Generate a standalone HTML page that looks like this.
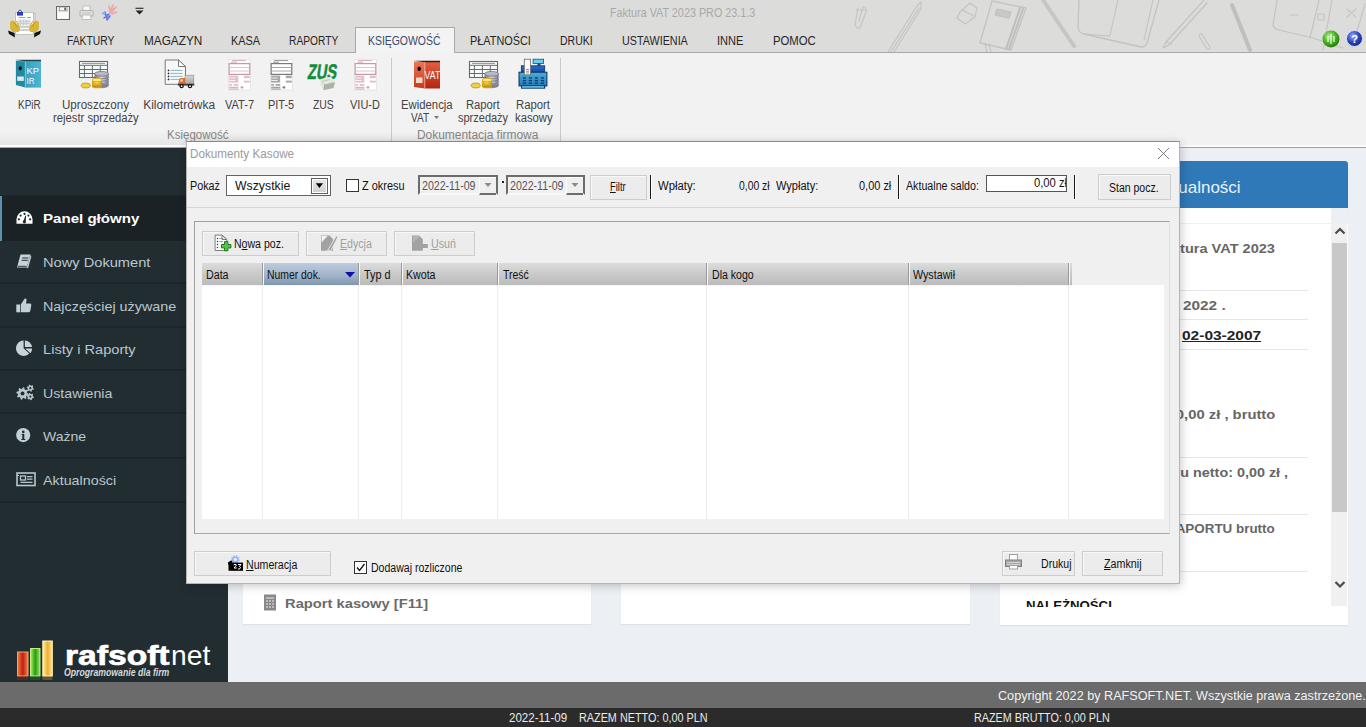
<!DOCTYPE html><html><head><meta charset="utf-8"><style>
html,body{margin:0;padding:0;width:1366px;height:727px;overflow:hidden;position:relative;background:#ecf0f5;font-family:"Liberation Sans",sans-serif;}
.t{position:absolute;white-space:pre;transform-origin:0 0;}
.r{position:absolute;box-sizing:border-box;}
u{text-decoration:underline;}
</style></head><body>
<div class="r" style="left:0px;top:0px;width:1366px;height:52px;background:#dcdcdb;"></div>
<svg class="r" style="left:0px;top:0px;" width="1366" height="52" viewBox="0 0 1366 52">
<g fill="none" stroke="#c3c3c2" stroke-width="1.1" stroke-linejoin="round" stroke-linecap="round">
<path d="M858 8 L855 24 Q856 29 860 28 L866 12 Q867 7 863 7 L859 21" />
<path d="M856 10 h10"/>
<path d="M888 52 L917 6 M891 52 L919 8 M894 52 L921 9 M917 6 L921 2 L921 9"/>
<path d="M960 12 L970 3 L977 8 L975 17 L965 24 L957 18z M962 10 l12 6"/>
<path d="M992 1 L1026 8 L1011 50 L980 43z" stroke-width="1.3"/>
<path d="M1020 8 L1006 49 M1023 9 L1009 49" stroke-width="2" stroke="#bdbdbc"/>
<path d="M997 9 L1011 12 L1009 18 L995 15z" fill="#c8c8c7" stroke="#c0c0bf"/>
<path d="M985 43 L987 52 M989 44 L991 52" />
<path d="M1043 0 L1074 46" stroke-width="4" stroke="#c6c6c5"/>
<path d="M1070 40 L1075 47" stroke-width="1.5"/>
<path d="M1079 0 L1078 27 Q1079 33 1084 34 L1141 47 Q1146 47 1147 43 L1159 0" stroke-width="1.3"/>
<path d="M1118 0 L1110 35 M1153 0 L1144 40 M1084 34 L1110 36"/>
<path d="M1204 0 L1166 42 L1163 48 L1169 45 L1207 3" stroke-width="1.2"/>
<path d="M1166 42 L1172 44"/>
<path d="M1199 36 L1207 49 Q1210 50 1210 47 L1202 34 Q1199 33 1199 36" />
<path d="M1232 5 L1250 50" stroke-width="4" stroke="#bfbfbe"/>
<path d="M1277 0 L1273 25 Q1274 29 1279 30 L1313 38 L1343 48" stroke-width="1.2"/>
<path d="M1319 0 L1310 38 M1332 0 L1323 50 M1290 15 h8 M1318 14 h6 v6 h-6z"/>
<path d="M1347 9 L1356 17 M1356 9 L1347 17" />
<path d="M1365 4 L1352 48" />
</g></svg>
<span class="t" style="left:609.70px;top:7.24px;font-size:12px;line-height:12px;color:#a9a9a9;transform:scaleX(0.9006);">Faktura VAT 2023 PRO 23.1.3</span>
<svg class="r" style="left:0px;top:0px;" width="50" height="45" viewBox="0 0 50 45">
<rect x="32" y="13.5" width="3" height="20" fill="#eee" stroke="#aaa" stroke-width="0.7"/>
<rect x="15.5" y="12.5" width="18" height="22" fill="#fdfdfd" stroke="#b8b8b8" stroke-width="0.8"/>
<path d="M18.5 17.5h7M27 17.5h4M19 27h12M19 30h12" stroke="#999" stroke-width="0.9"/>
<rect x="17.5" y="19.5" width="13" height="6" fill="#e4e4e4"/>
<path d="M17.5 21.5h13M17.5 23.5h13M20.5 19.5v6M23.5 19.5v6M26.5 19.5v6" stroke="#c6c6c6" stroke-width="0.7"/>
<rect x="17" y="12" width="6" height="3.6" fill="#2a3cc8"/>
<path d="M18.3 12 q1.7 -4.2 3.4 0" fill="none" stroke="#444" stroke-width="0.9"/>
<path d="M10 23 Q11 19.5 13.5 21 L19.5 26.5 Q21 30 18.5 32 L13 32.5 Q10 30 10 27z" fill="#d9b63a"/>
<path d="M16 21 l3 5 M13.5 21.5 l4 6" stroke="#b89420" stroke-width="0.8"/>
<path d="M39 23 Q38 19.5 35.5 21 L29.5 26.5 Q28 30 30.5 32 L36 32.5 Q39 30 39 27z" fill="#d9b63a"/>
<path d="M33 21 l-3 5 M35.5 21.5 l-4 6" stroke="#b89420" stroke-width="0.8"/>
<path d="M8 30.5 L14.5 33 L15 37.5 L9 34z" fill="#111"/>
<path d="M41 30.5 L34.5 33 L34 37.5 L40 34z" fill="#111"/>
</svg>
<svg class="r" style="left:56px;top:6px;" width="14" height="14" viewBox="0 0 14 14"><rect x="0.5" y="0.5" width="13" height="13" fill="#ececec" stroke="#6a6a6a"/><rect x="3.5" y="1" width="7.5" height="3.8" fill="#fafafa" stroke="#777" stroke-width="0.6"/><rect x="8.3" y="1.6" width="1.6" height="2.6" fill="#555"/><rect x="1.8" y="6.5" width="10.4" height="6.2" fill="#fbfbfb"/></svg>
<svg class="r" style="left:79px;top:5px;" width="15" height="16" viewBox="0 0 15 16"><rect x="4" y="1" width="7" height="4.5" fill="#f8f8f8" stroke="#b4b4b4" stroke-width="0.8"/><path d="M1 6.5 Q1 5.5 2 5.5 H13 Q14 5.5 14 6.5 V11 H1z" fill="#e0e0e0" stroke="#a8a8a8" stroke-width="0.8"/><path d="M3 8h9" stroke="#c4c4c4"/><path d="M3.5 10 H11.5 L12 14.5 H3z" fill="#fafafa" stroke="#b4b4b4" stroke-width="0.8"/></svg>
<svg class="r" style="left:100px;top:3px;" width="18" height="19" viewBox="0 0 18 19"><path d="M10 9 L13 2 M11 10 L16 4 M10 9 L9 3 M12 11 L16.5 9" stroke="#f0a0b0" stroke-width="1.6" stroke-linecap="round"/><path d="M11 8 L14 5" stroke="#f0b070" stroke-width="1.4"/><path d="M3 10 L8 13 M5 9 L7 16 M4 15 L9 11 M7 17 L10 13" stroke="#6a78e0" stroke-width="1.6" stroke-linecap="round"/><path d="M3 9 L5 11" stroke="#80d0f0" stroke-width="1.4"/></svg>
<svg class="r" style="left:134px;top:7px;" width="11" height="8" viewBox="0 0 11 8"><path d="M1.5 1.3h8" stroke="#333" stroke-width="1.2"/><path d="M1.5 3.6h8l-4 3.8z" fill="#222"/></svg>
<svg class="r" style="left:1322px;top:30px;" width="18" height="18" viewBox="0 0 18 18"><defs><radialGradient id="gg" cx="40%" cy="35%" r="65%"><stop offset="0" stop-color="#b8f090"/><stop offset="0.6" stop-color="#44b020"/><stop offset="1" stop-color="#2a7a10"/></radialGradient></defs><circle cx="9" cy="9" r="8.5" fill="url(#gg)"/><path d="M9 4v10M6 6v6M12 6v6" stroke="#e8ffe0" stroke-width="1.2"/></svg>
<svg class="r" style="left:1346px;top:30px;" width="17" height="17" viewBox="0 0 17 17"><defs><radialGradient id="bg2" cx="40%" cy="35%" r="65%"><stop offset="0" stop-color="#9ab0ff"/><stop offset="0.6" stop-color="#2a44b8"/><stop offset="1" stop-color="#1a2a88"/></radialGradient></defs><circle cx="8.5" cy="8.5" r="8" fill="url(#bg2)" stroke="#dfe4f8" stroke-width="1"/><text x="8.5" y="13" font-size="11" font-weight="bold" text-anchor="middle" fill="#fff" font-family="Liberation Sans">?</text></svg>
<div class="r" style="left:0px;top:52px;width:1366px;height:1px;background:#a9a9a9;"></div>
<div class="r" style="left:355px;top:27px;width:100px;height:26px;background:#f3f3f3;border:1px solid #a9a9a9;border-bottom:none;"></div>
<span class="t" style="left:67.30px;top:34.74px;font-size:12px;line-height:12px;color:#262626;transform:scaleX(0.8582);">FAKTURY</span>
<span class="t" style="left:144.00px;top:34.74px;font-size:12px;line-height:12px;color:#262626;transform:scaleX(0.9831);">MAGAZYN</span>
<span class="t" style="left:231.00px;top:34.74px;font-size:12px;line-height:12px;color:#262626;transform:scaleX(0.9062);">KASA</span>
<span class="t" style="left:289.00px;top:34.74px;font-size:12px;line-height:12px;color:#262626;transform:scaleX(0.8517);">RAPORTY</span>
<span class="t" style="left:368.00px;top:34.74px;font-size:12px;line-height:12px;color:#3b4a6b;transform:scaleX(0.8690);">KSIĘGOWOŚĆ</span>
<span class="t" style="left:470.30px;top:34.74px;font-size:12px;line-height:12px;color:#262626;transform:scaleX(0.9060);">PŁATNOŚCI</span>
<span class="t" style="left:560.00px;top:34.74px;font-size:12px;line-height:12px;color:#262626;transform:scaleX(0.8784);">DRUKI</span>
<span class="t" style="left:622.00px;top:34.74px;font-size:12px;line-height:12px;color:#262626;transform:scaleX(0.8973);">USTAWIENIA</span>
<span class="t" style="left:717.00px;top:34.74px;font-size:12px;line-height:12px;color:#262626;transform:scaleX(0.9207);">INNE</span>
<span class="t" style="left:773.00px;top:34.74px;font-size:12px;line-height:12px;color:#262626;transform:scaleX(0.9435);">POMOC</span>
<div class="r" style="left:0px;top:53px;width:1366px;height:92px;background:#f2f2f2;"></div>
<div class="r" style="left:0px;top:131px;width:561px;height:14px;background:linear-gradient(#f2f2f2,#e6e6e6);"></div>
<div class="r" style="left:0px;top:145px;width:1366px;height:2px;background:#fbfbfb;"></div>
<div class="r" style="left:0px;top:147px;width:1366px;height:1px;background:#a4a4a4;"></div>
<div class="r" style="left:391px;top:58px;width:1px;height:83px;background:#c9c9c9;"></div>
<div class="r" style="left:560px;top:58px;width:1px;height:83px;background:#c9c9c9;"></div>
<span class="t" style="left:17.60px;top:98.84px;font-size:12px;line-height:12px;color:#444;transform:scaleX(0.8286);">KPiR</span>
<span class="t" style="left:62.40px;top:98.84px;font-size:12px;line-height:12px;color:#444;transform:scaleX(0.9652);">Uproszczony</span>
<span class="t" style="left:52.70px;top:112.04px;font-size:12px;line-height:12px;color:#444;transform:scaleX(0.9374);">rejestr sprzedaży</span>
<span class="t" style="left:143.20px;top:98.84px;font-size:12px;line-height:12px;color:#444;">Kilometrówka</span>
<span class="t" style="left:225.30px;top:98.84px;font-size:12px;line-height:12px;color:#444;transform:scaleX(0.9219);">VAT-7</span>
<span class="t" style="left:268.40px;top:98.84px;font-size:12px;line-height:12px;color:#444;transform:scaleX(0.9103);">PIT-5</span>
<span class="t" style="left:313.00px;top:98.84px;font-size:12px;line-height:12px;color:#444;transform:scaleX(0.8667);">ZUS</span>
<span class="t" style="left:350.20px;top:98.84px;font-size:12px;line-height:12px;color:#444;transform:scaleX(0.9152);">VIU-D</span>
<span class="t" style="left:400.60px;top:98.84px;font-size:12px;line-height:12px;color:#444;transform:scaleX(0.9436);">Ewidencja</span>
<span class="t" style="left:411.40px;top:112.04px;font-size:12px;line-height:12px;color:#444;transform:scaleX(0.8364);">VAT</span>
<span class="t" style="left:466.40px;top:98.84px;font-size:12px;line-height:12px;color:#444;transform:scaleX(0.9351);">Raport</span>
<span class="t" style="left:458.40px;top:112.04px;font-size:12px;line-height:12px;color:#444;transform:scaleX(0.9164);">sprzedaży</span>
<span class="t" style="left:516.40px;top:98.84px;font-size:12px;line-height:12px;color:#444;transform:scaleX(0.9405);">Raport</span>
<span class="t" style="left:515.00px;top:112.04px;font-size:12px;line-height:12px;color:#444;transform:scaleX(0.9400);">kasowy</span>
<svg class="r" style="left:434px;top:116px;" width="6" height="4" viewBox="0 0 6 4"><path d="M0 0h5l-2.5 3z" fill="#777"/></svg>
<span class="t" style="left:167.00px;top:128.84px;font-size:12px;line-height:12px;color:#848484;transform:scaleX(0.9609);">Księgowość</span>
<span class="t" style="left:416.70px;top:128.84px;font-size:12px;line-height:12px;color:#848484;transform:scaleX(0.9943);">Dokumentacja firmowa</span>
<svg class="r" style="left:10px;top:55px;" width="40" height="37" viewBox="0 0 40 37"><defs><linearGradient id="kpf" x1="0" x2="1"><stop offset="0" stop-color="#3a9fbc"/><stop offset="1" stop-color="#4cb4d4"/></linearGradient></defs>
<path d="M5.9 5.5 L15.3 6.5 L15.3 32.6 L5.9 30z" fill="#23899e"/>
<rect x="15.3" y="6.5" width="15.7" height="26.1" fill="url(#kpf)"/>
<path d="M5.9 4.8 H31 V6.6 H15.3z" fill="#1d4a52"/>
<path d="M15.3 6.5 V32.6" stroke="#7fd4ea" stroke-width="0.8"/>
<ellipse cx="10.3" cy="13.3" rx="1.7" ry="2.1" fill="#0d1a1c"/>
<rect x="7.2" y="21.5" width="6.6" height="4.4" fill="#dfe9ea"/>
<text x="16.6" y="18.6" font-size="9.5" font-family="Liberation Sans" fill="#f4fcff" textLength="12.5" lengthAdjust="spacingAndGlyphs">KP</text>
<text x="16.6" y="29" font-size="9.5" font-family="Liberation Sans" fill="#f4fcff" textLength="8" lengthAdjust="spacingAndGlyphs">IR</text></svg>
<svg class="r" style="left:77px;top:60px;" width="34" height="30" viewBox="0 0 34 30"><defs><linearGradient id="slv77" x1="0" x2="1"><stop offset="0" stop-color="#7a7a88"/><stop offset="0.5" stop-color="#d8d8e0"/><stop offset="1" stop-color="#808090"/></linearGradient>
<linearGradient id="gld77" x1="0" x2="1"><stop offset="0" stop-color="#e0a810"/><stop offset="0.5" stop-color="#ffe060"/><stop offset="1" stop-color="#d09810"/></linearGradient></defs>
<rect x="2.5" y="1.5" width="28" height="16" fill="#fafcfc" stroke="#5e6e6e" stroke-width="1.1"/>
<path d="M2.5 5.3h28M2.5 9.5h28M2.5 13.5h28M7.4 5.3v12.2M15.4 5.3v12.2M23.3 5.3v12.2" stroke="#5e6e6e" stroke-width="1"/>
<path d="M5 3.4h23" stroke="#6a7a7a" stroke-width="0.8"/>
<rect x="17.6" y="13.8" width="14" height="12.2" fill="url(#slv77)"/>
<ellipse cx="24.6" cy="13.8" rx="7" ry="2.4" fill="#b8b8c4" stroke="#6a6a7a" stroke-width="0.7"/>
<ellipse cx="24.6" cy="26" rx="7" ry="2.2" fill="#8a8a98"/>
<path d="M17.6 16.5 a7 2.2 0 0 0 14 0" fill="none" stroke="#6a6a7a" stroke-width="0.7"/><path d="M17.6 19 a7 2.2 0 0 0 14 0" fill="none" stroke="#6a6a7a" stroke-width="0.7"/><path d="M17.6 21.5 a7 2.2 0 0 0 14 0" fill="none" stroke="#6a6a7a" stroke-width="0.7"/><path d="M17.6 24 a7 2.2 0 0 0 14 0" fill="none" stroke="#6a6a7a" stroke-width="0.7"/>
<rect x="15" y="20" width="10" height="6.5" fill="url(#gld77)"/>
<ellipse cx="20" cy="20" rx="5" ry="1.9" fill="#ffe878" stroke="#c09010" stroke-width="0.7"/>
<ellipse cx="20" cy="26.5" rx="5" ry="1.8" fill="#d8a010"/>
<path d="M15 22.5 a5 1.8 0 0 0 10 0" fill="none" stroke="#b88a10" stroke-width="0.7"/><path d="M15 25 a5 1.8 0 0 0 10 0" fill="none" stroke="#b88a10" stroke-width="0.7"/>
<ellipse cx="8.7" cy="25.5" rx="4.6" ry="2.4" fill="#f0d040" stroke="#b89010" stroke-width="0.8"/></svg>
<svg class="r" style="left:467px;top:60px;" width="34" height="30" viewBox="0 0 34 30"><defs><linearGradient id="slv467" x1="0" x2="1"><stop offset="0" stop-color="#7a7a88"/><stop offset="0.5" stop-color="#d8d8e0"/><stop offset="1" stop-color="#808090"/></linearGradient>
<linearGradient id="gld467" x1="0" x2="1"><stop offset="0" stop-color="#e0a810"/><stop offset="0.5" stop-color="#ffe060"/><stop offset="1" stop-color="#d09810"/></linearGradient></defs>
<rect x="2.5" y="1.5" width="28" height="16" fill="#fafcfc" stroke="#5e6e6e" stroke-width="1.1"/>
<path d="M2.5 5.3h28M2.5 9.5h28M2.5 13.5h28M7.4 5.3v12.2M15.4 5.3v12.2M23.3 5.3v12.2" stroke="#5e6e6e" stroke-width="1"/>
<path d="M5 3.4h23" stroke="#6a7a7a" stroke-width="0.8"/>
<rect x="17.6" y="13.8" width="14" height="12.2" fill="url(#slv467)"/>
<ellipse cx="24.6" cy="13.8" rx="7" ry="2.4" fill="#b8b8c4" stroke="#6a6a7a" stroke-width="0.7"/>
<ellipse cx="24.6" cy="26" rx="7" ry="2.2" fill="#8a8a98"/>
<path d="M17.6 16.5 a7 2.2 0 0 0 14 0" fill="none" stroke="#6a6a7a" stroke-width="0.7"/><path d="M17.6 19 a7 2.2 0 0 0 14 0" fill="none" stroke="#6a6a7a" stroke-width="0.7"/><path d="M17.6 21.5 a7 2.2 0 0 0 14 0" fill="none" stroke="#6a6a7a" stroke-width="0.7"/><path d="M17.6 24 a7 2.2 0 0 0 14 0" fill="none" stroke="#6a6a7a" stroke-width="0.7"/>
<rect x="15" y="20" width="10" height="6.5" fill="url(#gld467)"/>
<ellipse cx="20" cy="20" rx="5" ry="1.9" fill="#ffe878" stroke="#c09010" stroke-width="0.7"/>
<ellipse cx="20" cy="26.5" rx="5" ry="1.8" fill="#d8a010"/>
<path d="M15 22.5 a5 1.8 0 0 0 10 0" fill="none" stroke="#b88a10" stroke-width="0.7"/><path d="M15 25 a5 1.8 0 0 0 10 0" fill="none" stroke="#b88a10" stroke-width="0.7"/>
<ellipse cx="8.7" cy="25.5" rx="4.6" ry="2.4" fill="#f0d040" stroke="#b89010" stroke-width="0.8"/></svg>
<svg class="r" style="left:158px;top:54px;" width="45" height="40" viewBox="0 0 45 40"><defs><linearGradient id="trk" x1="0" y1="0" x2="0" y2="1"><stop offset="0" stop-color="#d8d8d8"/><stop offset="1" stop-color="#a4a4a4"/></linearGradient></defs>
<path d="M7.2 6 H20.5 L27.5 12.5 V30.3 H7.2z" fill="#f7f9f9" stroke="#787878" stroke-width="1"/>
<path d="M20.5 6 V12.5 H27.5z" fill="#fff" stroke="#787878" stroke-width="1" stroke-linejoin="round"/>
<circle cx="10.5" cy="16.4" r="0.85" fill="#222"/><path d="M12.4 16.4H24.5" stroke="#8fb4c4" stroke-width="1"/><circle cx="10.5" cy="19.4" r="0.85" fill="#222"/><path d="M12.4 19.4H24.5" stroke="#8fb4c4" stroke-width="1"/><circle cx="10.5" cy="22.4" r="0.85" fill="#222"/><path d="M12.4 22.4H24.5" stroke="#8fb4c4" stroke-width="1"/><circle cx="10.5" cy="25.4" r="0.85" fill="#222"/><path d="M12.4 25.4H24.5" stroke="#8fb4c4" stroke-width="1"/>
<rect x="27" y="21.2" width="8.8" height="9" fill="url(#trk)" stroke="#8a8a8a" stroke-width="0.6"/>
<path d="M20 30.2 L21.3 25 Q22 24 23.5 24 H27 V30.2z" fill="#d8702c"/>
<path d="M22 27.5 L22.8 25.3 H25 V27.5z" fill="#f0c8a0"/>
<rect x="19.8" y="29.8" width="16.5" height="1.8" fill="#3a3a3a"/>
<circle cx="23.6" cy="32.2" r="2.1" fill="#111"/><circle cx="23.6" cy="32.2" r="0.9" fill="#fff"/>
<circle cx="32" cy="32.2" r="2.1" fill="#111"/><circle cx="32" cy="32.2" r="0.9" fill="#fff"/></svg>
<svg class="r" style="left:228px;top:58.5px;" width="23" height="32" viewBox="0 0 23 32"><rect x="0.5" y="0.5" width="22" height="30.5" fill="#fff" stroke="#e2e2e2" stroke-width="0.8"/>
<path d="M4 1.6h14M3 3.2h6" stroke="#c898a8" stroke-width="0.8"/>
<rect x="1.2" y="4.6" width="20.5" height="10.8" fill="none" stroke="#c898a8" stroke-width="1.2"/>
<path d="M1.2 8.5h20.5M1.2 12h20.5" stroke="#e4c0cc" stroke-width="1"/>
<rect x="1.2" y="16.6" width="8.8" height="7" fill="#e4c0cc"/>
<path d="M1.5 19h6M1.5 21.5h6" stroke="#fff" stroke-width="0.8"/>
<rect x="15.8" y="16.6" width="6" height="2.6" fill="#e4c0cc"/><rect x="15.8" y="21.6" width="6" height="2" fill="#e4c0cc"/>
<rect x="1.2" y="25" width="2.8" height="1.8" fill="#e4c0cc"/><rect x="5.6" y="25" width="4.6" height="1.8" fill="#e4c0cc"/>
<path d="M1.2 28.3h9.5M1.2 30h9.5" stroke="#c898a8" stroke-width="0.9"/>
<rect x="12.6" y="27.4" width="2.6" height="2" fill="#c898a8"/>
<path d="M10.5 16.5v13" stroke="#eee" stroke-width="0.8"/></svg>
<svg class="r" style="left:270px;top:58.5px;" width="23" height="32" viewBox="0 0 23 32"><rect x="0.5" y="0.5" width="22" height="30.5" fill="#fff" stroke="#e2e2e2" stroke-width="0.8"/>
<path d="M4 1.6h14M3 3.2h6" stroke="#7a7a7a" stroke-width="0.8"/>
<rect x="1.2" y="4.6" width="20.5" height="10.8" fill="none" stroke="#7a7a7a" stroke-width="1.2"/>
<path d="M1.2 8.5h20.5M1.2 12h20.5" stroke="#a8a8a8" stroke-width="1"/>
<rect x="1.2" y="16.6" width="8.8" height="7" fill="#a8a8a8"/>
<path d="M1.5 19h6M1.5 21.5h6" stroke="#fff" stroke-width="0.8"/>
<rect x="15.8" y="16.6" width="6" height="2.6" fill="#a8a8a8"/><rect x="15.8" y="21.6" width="6" height="2" fill="#a8a8a8"/>
<rect x="1.2" y="25" width="2.8" height="1.8" fill="#a8a8a8"/><rect x="5.6" y="25" width="4.6" height="1.8" fill="#a8a8a8"/>
<path d="M1.2 28.3h9.5M1.2 30h9.5" stroke="#7a7a7a" stroke-width="0.9"/>
<rect x="12.6" y="27.4" width="2.6" height="2" fill="#7a7a7a"/>
<path d="M10.5 16.5v13" stroke="#eee" stroke-width="0.8"/></svg>
<svg class="r" style="left:354px;top:58.5px;" width="23" height="32" viewBox="0 0 23 32"><rect x="0.5" y="0.5" width="22" height="30.5" fill="#fff" stroke="#e2e2e2" stroke-width="0.8"/>
<path d="M4 1.6h14M3 3.2h6" stroke="#c898a8" stroke-width="0.8"/>
<rect x="1.2" y="4.6" width="20.5" height="10.8" fill="none" stroke="#c898a8" stroke-width="1.2"/>
<path d="M1.2 8.5h20.5M1.2 12h20.5" stroke="#e4c0cc" stroke-width="1"/>
<rect x="1.2" y="16.6" width="8.8" height="7" fill="#e4c0cc"/>
<path d="M1.5 19h6M1.5 21.5h6" stroke="#fff" stroke-width="0.8"/>
<rect x="15.8" y="16.6" width="6" height="2.6" fill="#e4c0cc"/><rect x="15.8" y="21.6" width="6" height="2" fill="#e4c0cc"/>
<rect x="1.2" y="25" width="2.8" height="1.8" fill="#e4c0cc"/><rect x="5.6" y="25" width="4.6" height="1.8" fill="#e4c0cc"/>
<path d="M1.2 28.3h9.5M1.2 30h9.5" stroke="#c898a8" stroke-width="0.9"/>
<rect x="12.6" y="27.4" width="2.6" height="2" fill="#c898a8"/>
<path d="M10.5 16.5v13" stroke="#eee" stroke-width="0.8"/></svg>
<svg class="r" style="left:300px;top:55px;" width="45" height="40" viewBox="0 0 45 40"><text x="7" y="24.5" font-size="21" font-weight="bold" font-family="Liberation Sans" fill="#128c3e" stroke="#128c3e" stroke-width="0.6" textLength="29" lengthAdjust="spacingAndGlyphs" transform="skewX(-8) translate(3.5 0)">ZUS</text>
<path d="M20.5 24 L31 21.5 L35 27 L33.5 33 L24 35 L20 30z" fill="#e4e8e0"/><path d="M24 35 L33.5 33 L35 27 L24.5 29.5z" fill="#aab4a8"/><path d="M24.5 29.5 L24 35" stroke="#8a948a" stroke-width="0.6"/><path d="M21.5 26.5 l8 -2 M22 28.5 l2 -0.5" stroke="#b0b8b0" stroke-width="0.7"/></svg>
<svg class="r" style="left:405px;top:55px;" width="45" height="40" viewBox="0 0 45 40"><defs><linearGradient id="vtf" x1="0" y1="0" x2="0" y2="1"><stop offset="0" stop-color="#e2603e"/><stop offset="1" stop-color="#b42414"/></linearGradient>
<linearGradient id="vts" x1="0" y1="0" x2="0" y2="1"><stop offset="0" stop-color="#ec7858"/><stop offset="1" stop-color="#c8381e"/></linearGradient></defs>
<path d="M9 6.5 L19.8 7 V33.5 L9 32z" fill="url(#vts)"/>
<rect x="19.8" y="7" width="15.2" height="26.5" fill="url(#vtf)"/>
<path d="M9 5.8 H35 V7.3 H19.8z" fill="#3a1a10"/>
<path d="M19.8 7 V33.5" stroke="#f8b8a0" stroke-width="0.7"/>
<ellipse cx="14.2" cy="13.8" rx="1.8" ry="2.3" fill="#140808"/>
<rect x="11" y="22.5" width="6.5" height="5.5" fill="#efd8c4"/>
<text x="19.6" y="24.4" font-size="11" font-family="Liberation Sans" fill="#fff" textLength="15.6" lengthAdjust="spacingAndGlyphs">VAT</text></svg>
<svg class="r" style="left:510px;top:54px;" width="45" height="40" viewBox="0 0 45 40"><defs><linearGradient id="cru" x1="0" y1="0" x2="0" y2="1"><stop offset="0" stop-color="#2a6ed0"/><stop offset="1" stop-color="#1048a0"/></linearGradient>
<linearGradient id="crl" x1="0" y1="0" x2="0" y2="1"><stop offset="0" stop-color="#48b0d8"/><stop offset="1" stop-color="#2878b8"/></linearGradient></defs>
<rect x="23.1" y="5.2" width="10.5" height="4.2" fill="#68cff0" stroke="#1a4a80" stroke-width="0.8"/>
<rect x="27.5" y="9.4" width="3" height="2.6" fill="#1a4a80"/>
<rect x="11.3" y="11.8" width="23.4" height="6.8" fill="url(#cru)" stroke="#0c3060" stroke-width="0.8"/>
<rect x="9" y="18.2" width="27.9" height="13.7" fill="url(#crl)" stroke="#0c3060" stroke-width="1"/>
<rect x="14.3" y="5.2" width="6.3" height="15.7" fill="#fbfbfb" stroke="#6a6a6a" stroke-width="0.8"/>
<path d="M16 15.5h3M16 17.3h3M16 19h3" stroke="#5a6a8a" stroke-width="0.7"/>
<rect x="12.8" y="23.3" width="3.2" height="1.3" fill="#0c3a70"/><rect x="12.8" y="25.9" width="3.2" height="1.3" fill="#0c3a70"/><rect x="12.8" y="28.5" width="3.2" height="1.3" fill="#0c3a70"/><rect x="18.8" y="23.3" width="3.2" height="1.3" fill="#0c3a70"/><rect x="18.8" y="25.9" width="3.2" height="1.3" fill="#0c3a70"/><rect x="18.8" y="28.5" width="3.2" height="1.3" fill="#0c3a70"/><rect x="24.8" y="23.3" width="3.2" height="1.3" fill="#0c3a70"/><rect x="24.8" y="25.9" width="3.2" height="1.3" fill="#0c3a70"/><rect x="24.8" y="28.5" width="3.2" height="1.3" fill="#0c3a70"/><rect x="30.8" y="23.3" width="3.2" height="1.3" fill="#0c3a70"/><rect x="30.8" y="25.9" width="3.2" height="1.3" fill="#0c3a70"/><rect x="30.8" y="28.5" width="3.2" height="1.3" fill="#0c3a70"/>
<rect x="11" y="31.6" width="24.2" height="3.1" fill="#0c3a70"/><rect x="12" y="32.2" width="22" height="1.5" fill="#6ad0f0"/></svg>
<div class="r" style="left:0px;top:148px;width:228px;height:534px;background:#222d32;"></div>
<div class="r" style="left:0px;top:196px;width:228px;height:45px;background:#1b2226;"></div>
<div class="r" style="left:0px;top:196px;width:2px;height:45px;background:#5d8fae;"></div>
<div class="r" style="left:0px;top:282px;width:228px;height:2px;background:#1c2529;"></div>
<div class="r" style="left:0px;top:326px;width:228px;height:2px;background:#1c2529;"></div>
<div class="r" style="left:0px;top:369px;width:228px;height:2px;background:#1c2529;"></div>
<div class="r" style="left:0px;top:412px;width:228px;height:2px;background:#1c2529;"></div>
<div class="r" style="left:0px;top:457px;width:228px;height:2px;background:#1c2529;"></div>
<div class="r" style="left:0px;top:501px;width:228px;height:2px;background:#1c2529;"></div>
<div class="r" style="left:0px;top:195px;width:228px;height:1px;background:#1c2529;"></div>
<span class="t" style="left:43.10px;top:212.10px;font-size:13px;line-height:13px;color:#ffffff;font-weight:bold;transform:scaleX(1.1595);">Panel główny</span>
<span class="t" style="left:42.80px;top:255.90px;font-size:13px;line-height:13px;color:#b8c7ce;transform:scaleX(1.1260);">Nowy Dokument</span>
<span class="t" style="left:42.80px;top:299.70px;font-size:13px;line-height:13px;color:#b8c7ce;transform:scaleX(1.1041);">Najczęściej używane</span>
<span class="t" style="left:42.80px;top:342.70px;font-size:13px;line-height:13px;color:#b8c7ce;transform:scaleX(1.1253);">Listy i Raporty</span>
<span class="t" style="left:42.80px;top:387.30px;font-size:13px;line-height:13px;color:#b8c7ce;transform:scaleX(1.0906);">Ustawienia</span>
<span class="t" style="left:42.80px;top:430.20px;font-size:13px;line-height:13px;color:#b8c7ce;transform:scaleX(1.0800);">Ważne</span>
<span class="t" style="left:42.80px;top:473.90px;font-size:13px;line-height:13px;color:#b8c7ce;transform:scaleX(1.1000);">Aktualności</span>
<svg class="r" style="left:15.5px;top:211px;" width="17" height="13" viewBox="0 0 17 13"><path d="M0.5 12.8 V8.3 A8 8 0 0 1 16.5 8.3 V12.8z" fill="#fff"/><circle cx="8.5" cy="2.9" r="1.1" fill="#1e282c"/><circle cx="4.6" cy="4.6" r="1.1" fill="#1e282c"/><circle cx="12.4" cy="4.6" r="1.1" fill="#1e282c"/><circle cx="2.9" cy="8.3" r="1.1" fill="#1e282c"/><circle cx="14.1" cy="8.3" r="1.1" fill="#1e282c"/><path d="M7.2 10.6 L9.4 4.5 L10.1 4.8 L9.6 10.8z" fill="#1e282c"/><circle cx="8.4" cy="10.8" r="1.6" fill="#1e282c"/></svg>
<svg class="r" style="left:15.5px;top:253.5px;" width="16" height="15" viewBox="0 0 16 15"><path d="M4.5 0.5 H14.3 L10.8 13.6 H1z" fill="#c9d3d6"/><path d="M14.3 0.5 L15.3 3 L12 14.5 L10.8 13.6z" fill="#b8c7ce"/><path d="M6.2 4 H12.4 M5.6 6.3 H11.8" stroke="#222d32" stroke-width="1"/><path d="M1.8 12.3 H10.6" stroke="#222d32" stroke-width="0.9"/></svg>
<svg class="r" style="left:15.5px;top:297.5px;" width="16" height="15" viewBox="0 0 16 15"><rect x="0.3" y="6.5" width="3.8" height="7.8" fill="#c3d0d6"/><path d="M4.8 6.6 L8.2 1.2 Q9.8 -0.2 10.6 1.8 L10 5.6 H14.4 Q15.6 6.2 15.2 7.8 L14.2 13.2 Q13.8 14.3 12.6 14.3 H4.8z" fill="#c3d0d6"/></svg>
<svg class="r" style="left:15.5px;top:339.5px;" width="17" height="17" viewBox="0 0 17 17"><path d="M7.6 8.2 L7.6 0.5 A7.7 7.7 0 1 0 13.2 13.6 z" fill="#c7d3d8"/><path d="M8.9 7.1 L8.9 0.5 A7.5 7.5 0 0 1 16 7.1 z" fill="#c7d3d8"/><path d="M9.3 8.5 L16.1 8.5 A7.5 7.5 0 0 1 14.4 13.2 z" fill="#c7d3d8"/></svg>
<svg class="r" style="left:15.5px;top:384px;" width="19" height="17" viewBox="0 0 19 17"><path d="M12.67 10.11 L12.43 11.30 L10.56 11.67 L10.06 12.42 L10.43 14.29 L9.42 14.97 L7.84 13.90 L6.95 14.08 L5.89 15.67 L4.70 15.43 L4.33 13.56 L3.58 13.06 L1.71 13.43 L1.03 12.42 L2.10 10.84 L1.92 9.95 L0.33 8.89 L0.57 7.70 L2.44 7.33 L2.94 6.58 L2.57 4.71 L3.58 4.03 L5.16 5.10 L6.05 4.92 L7.11 3.33 L8.30 3.57 L8.67 5.44 L9.42 5.94 L11.29 5.57 L11.97 6.58 L10.90 8.16 L11.08 9.05z" fill="#b8c7ce"/><circle cx="6.5" cy="9.5" r="2.0" fill="#222d32"/><path d="M17.87 4.67 L17.63 5.58 L16.36 5.78 L15.88 6.26 L15.68 7.53 L14.77 7.77 L13.96 6.78 L13.31 6.60 L12.11 7.06 L11.44 6.39 L11.90 5.19 L11.72 4.54 L10.73 3.73 L10.97 2.82 L12.24 2.62 L12.72 2.14 L12.92 0.87 L13.83 0.63 L14.64 1.62 L15.29 1.80 L16.49 1.34 L17.16 2.01 L16.70 3.21 L16.88 3.86z" fill="#b8c7ce"/><circle cx="14.3" cy="4.2" r="1.1" fill="#222d32"/><path d="M17.87 13.07 L17.63 13.98 L16.36 14.18 L15.88 14.66 L15.68 15.93 L14.77 16.17 L13.96 15.18 L13.31 15.00 L12.11 15.46 L11.44 14.79 L11.90 13.59 L11.72 12.94 L10.73 12.13 L10.97 11.22 L12.24 11.02 L12.72 10.54 L12.92 9.27 L13.83 9.03 L14.64 10.02 L15.29 10.20 L16.49 9.74 L17.16 10.41 L16.70 11.61 L16.88 12.26z" fill="#b8c7ce"/><circle cx="14.3" cy="12.6" r="1.1" fill="#222d32"/></svg>
<svg class="r" style="left:15.8px;top:428px;" width="15" height="15" viewBox="0 0 15 15"><circle cx="7.2" cy="7.1" r="7.1" fill="#c3d0d6"/><path d="M5.6 6 H8.3 V11 H9.3 V12 H5.3 V11 H6.3 V7 H5.6z" fill="#222d32"/><circle cx="7.3" cy="3.9" r="1.3" fill="#222d32"/></svg>
<svg class="r" style="left:15.5px;top:471.5px;" width="20" height="15" viewBox="0 0 20 15"><rect x="1" y="1" width="18" height="12.5" fill="none" stroke="#b8c7ce" stroke-width="1.6"/><path d="M1 3.5 H3" stroke="#b8c7ce"/><rect x="4.5" y="4" width="5" height="4" fill="none" stroke="#b8c7ce" stroke-width="1.3"/><path d="M11 4.7 H16.5 M11 7.2 H16.5 M4.5 10.3 H16.5" stroke="#b8c7ce" stroke-width="1.3"/></svg>
<svg class="r" style="left:15px;top:639px;" width="40" height="42" viewBox="0 0 40 42"><defs>
<linearGradient id="lr" x1="0" x2="1"><stop offset="0" stop-color="#f08040"/><stop offset="0.5" stop-color="#c02010"/><stop offset="1" stop-color="#f08050"/></linearGradient>
<linearGradient id="lg" x1="0" x2="1"><stop offset="0" stop-color="#b0f060"/><stop offset="0.5" stop-color="#20a010"/><stop offset="1" stop-color="#a0e060"/></linearGradient>
<linearGradient id="ly" x1="0" x2="1"><stop offset="0" stop-color="#fff0a0"/><stop offset="0.5" stop-color="#f0b030"/><stop offset="1" stop-color="#ffe090"/></linearGradient></defs>
<rect x="2.5" y="13" width="10.5" height="24" fill="url(#lr)" stroke="#f4a070" stroke-width="1"/>
<rect x="15.5" y="9.5" width="9.5" height="27.5" fill="url(#lg)" stroke="#c0f080" stroke-width="1"/>
<rect x="27.8" y="2" width="9.5" height="35" fill="url(#ly)" stroke="#fff4c0" stroke-width="1"/>
<rect x="2" y="37" width="11" height="4" fill="#c02010" opacity="0.3"/><rect x="15" y="37" width="10" height="4" fill="#20a010" opacity="0.3"/><rect x="27.3" y="37" width="10" height="4" fill="#f0b030" opacity="0.3"/></svg>
<span class="t" style="left:64.60px;top:641.70px;font-size:28px;line-height:28px;color:#ffffff;font-weight:bold;transform:scaleX(1.2000);-webkit-text-stroke:0.7px #fff;">rafsoft</span>
<span class="t" style="left:170.50px;top:641.70px;font-size:28px;line-height:28px;color:#ffffff;transform:scaleX(1.0077);">net</span>
<span class="t" style="left:63.80px;top:667.74px;font-size:10px;line-height:10px;color:#d8d8d8;font-weight:bold;font-style:italic;transform:scaleX(0.8694);">Oprogramowanie dla firm</span>
<div class="r" style="left:228px;top:148px;width:1138px;height:534px;background:#ecf0f5;"></div>
<div class="r" style="left:243px;top:161px;width:348px;height:463px;background:#fff;box-shadow:0 1px 1px rgba(0,0,0,0.06);"></div>
<div class="r" style="left:621px;top:161px;width:349px;height:463px;background:#fff;box-shadow:0 1px 1px rgba(0,0,0,0.06);"></div>
<div class="r" style="left:1000px;top:161px;width:348px;height:464px;background:#fff;box-shadow:0 1px 1px rgba(0,0,0,0.06);"></div>
<div class="r" style="left:1000px;top:161px;width:348px;height:47px;background:#3079b8;border-radius:3px 3px 0 0;"></div>
<span class="t" style="left:1153.70px;top:178.61px;font-size:17px;line-height:17px;color:#e6f2fc;">Aktualności</span>
<div class="r" style="left:1000px;top:208px;width:331px;height:417px;background:#fff;"></div>
<div class="r" style="left:1331px;top:208px;width:17px;height:15px;background:#ecf0f5;"></div>
<div class="r" style="left:1331px;top:606px;width:17px;height:19px;background:#fff;"></div>
<div class="r" style="left:1000px;top:223px;width:366px;height:1px;background:#eef1f4;"></div>
<div class="r" style="left:1010px;top:290px;width:298px;height:1px;background:#e6e6e6;"></div>
<div class="r" style="left:1010px;top:319px;width:298px;height:1px;background:#e6e6e6;"></div>
<div class="r" style="left:1010px;top:349px;width:298px;height:1px;background:#e6e6e6;"></div>
<div class="r" style="left:1010px;top:457px;width:298px;height:1px;background:#e6e6e6;"></div>
<div class="r" style="left:1010px;top:514px;width:298px;height:1px;background:#e6e6e6;"></div>
<div class="r" style="left:1010px;top:571px;width:298px;height:1px;background:#e6e6e6;"></div>
<span class="t" style="left:1154.87px;top:241.90px;font-size:13px;line-height:13px;color:#666;font-weight:bold;transform:scaleX(1.1190);">Faktura VAT 2023</span>
<span class="t" style="left:1182.80px;top:298.60px;font-size:13px;line-height:13px;color:#666;font-weight:bold;transform:scaleX(1.1806);">2022 .</span>
<span class="t" style="left:1182.00px;top:329.10px;font-size:13px;line-height:13px;color:#222;font-weight:bold;transform:scaleX(1.1910);text-decoration:underline;">02-03-2007</span>
<span class="t" style="left:1129.20px;top:408.00px;font-size:13px;line-height:13px;color:#666;font-weight:bold;transform:scaleX(1.1380);">razem 0,00 zł , brutto</span>
<span class="t" style="left:1129.78px;top:466.00px;font-size:13px;line-height:13px;color:#666;font-weight:bold;transform:scaleX(1.1050);">Razem u netto: 0,00 zł ,</span>
<span class="t" style="left:1165.64px;top:522.00px;font-size:13px;line-height:13px;color:#666;font-weight:bold;transform:scaleX(1.0310);">RAPORTU brutto</span>
<div class="r" style="left:1000px;top:590px;width:331px;height:17px;overflow:hidden;">
<span class="t" style="left:25.50px;top:9.30px;font-size:13px;line-height:13px;color:#111;font-weight:bold;transform:scaleX(1.0153);">NALEŻNOŚCI</span>
</div>
<div class="r" style="left:1331px;top:223px;width:16px;height:383px;background:#f0f0f0;"></div>
<div class="r" style="left:1332px;top:243px;width:15px;height:269px;background:#c8c8c8;"></div>
<svg class="r" style="left:1333px;top:225px;" width="14" height="11" viewBox="0 0 14 11"><path d="M2.5 8.5 L7 4 L11.5 8.5" fill="none" stroke="#4a4a4a" stroke-width="2.2"/></svg>
<svg class="r" style="left:1333px;top:579px;" width="14" height="11" viewBox="0 0 14 11"><path d="M2.5 3 L7 7.5 L11.5 3" fill="none" stroke="#4a4a4a" stroke-width="2.2"/></svg>
<svg class="r" style="left:263px;top:594px;" width="15" height="17" viewBox="0 0 15 17"><rect x="1" y="0.5" width="12" height="16" fill="#888"/><path d="M3 4h8M3 7h2M6 7h2M9 7h2M3 10h2M6 10h2M9 10h2M3 13h2M6 13h2M9 13h2" stroke="#eee" stroke-width="1.2"/></svg>
<span class="t" style="left:285.00px;top:597.00px;font-size:13px;line-height:13px;color:#6a6a6a;font-weight:bold;transform:scaleX(1.1325);">Raport kasowy [F11]</span>
<div class="r" style="left:0px;top:682px;width:1366px;height:26px;background:#6b6b6b;"></div>
<div class="r" style="left:0px;top:708px;width:1366px;height:19px;background:#2b2b2b;"></div>
<span class="t" style="left:997.50px;top:689.74px;font-size:12px;line-height:12px;color:#f2f2f2;transform:scaleX(1.0527);">Copyright 2022 by RAFSOFT.NET. Wszystkie prawa zastrzeżone.</span>
<span class="t" style="left:508.70px;top:712.34px;font-size:12px;line-height:12px;color:#eaeaea;transform:scaleX(0.9607);">2022-11-09</span>
<span class="t" style="left:578.50px;top:712.34px;font-size:12px;line-height:12px;color:#eaeaea;transform:scaleX(0.9021);">RAZEM NETTO: 0,00 PLN</span>
<span class="t" style="left:974.30px;top:712.34px;font-size:12px;line-height:12px;color:#eaeaea;transform:scaleX(0.8987);">RAZEM BRUTTO: 0,00 PLN</span>
<div class="r" style="left:186px;top:141px;width:994px;height:443px;background:#f0f0f0;border:1px solid #b4b4b4;border-top-color:#8a8a8a;box-shadow:1px 2px 9px rgba(0,0,0,0.22);"></div>
<div class="r" style="left:187px;top:142px;width:992px;height:25px;background:#ffffff;"></div>
<span class="t" style="left:189.50px;top:147.74px;font-size:12px;line-height:12px;color:#9a9a9a;transform:scaleX(0.9757);">Dokumenty Kasowe</span>
<svg class="r" style="left:1157px;top:147px;" width="13" height="13" viewBox="0 0 13 13"><path d="M1 1 L12 12 M12 1 L1 12" stroke="#808080" stroke-width="1"/></svg>
<div class="r" style="left:187px;top:207px;width:992px;height:1px;background:#d6d6d6;"></div>
<span class="t" style="left:189.80px;top:179.84px;font-size:12px;line-height:12px;color:#111;transform:scaleX(0.8970);">Pokaż</span>
<div class="r" style="left:226px;top:175px;width:105px;height:21px;background:#fff;border:1px solid #646464;"></div>
<div class="r" style="left:311px;top:178px;width:17px;height:16px;background:linear-gradient(#e8e8e8,#d0d0d0);border:1px solid #5e5e5e;box-shadow:inset 0 0 0 1px #fff;"></div>
<svg class="r" style="left:315px;top:183px;" width="10" height="6" viewBox="0 0 10 6"><path d="M0.8 0.3h7.2l-3.6 4.6z" fill="#000"/></svg>
<span class="t" style="left:234.80px;top:179.00px;font-size:13px;line-height:13px;color:#111;transform:scaleX(0.9441);">Wszystkie</span>
<div class="r" style="left:346px;top:179px;width:13px;height:13px;background:#fff;border:1px solid #333;"></div>
<span class="t" style="left:361.50px;top:179.84px;font-size:12px;line-height:12px;color:#111;transform:scaleX(0.9106);">Z okresu</span>
<div class="r" style="left:418px;top:175px;width:80px;height:20px;background:#f0f0f0;border:2px solid;border-color:#6c6c6c #6c6c6c #f8f8f8 #6c6c6c;"></div>
<div class="r" style="left:479px;top:177px;width:17px;height:18px;background:#efefef;border-left:1px solid #fff;border-top:1px solid #fff;border-bottom:2px solid #6c6c6c;"></div>
<svg class="r" style="left:484px;top:183px;" width="9" height="5" viewBox="0 0 9 5"><path d="M0.5 0h7l-3.5 4z" fill="#8a8a8a"/></svg>
<div class="r" style="left:506px;top:175px;width:79px;height:20px;background:#f0f0f0;border:2px solid;border-color:#6c6c6c #6c6c6c #f8f8f8 #6c6c6c;"></div>
<div class="r" style="left:566px;top:177px;width:17px;height:18px;background:#efefef;border-left:1px solid #fff;border-top:1px solid #fff;border-bottom:2px solid #6c6c6c;"></div>
<svg class="r" style="left:571px;top:183px;" width="9" height="5" viewBox="0 0 9 5"><path d="M0.5 0h7l-3.5 4z" fill="#8a8a8a"/></svg>
<span class="t" style="left:422.40px;top:179.84px;font-size:12px;line-height:12px;color:#555555;transform:scaleX(0.8836);">2022-11-09</span>
<span class="t" style="left:510.20px;top:179.84px;font-size:12px;line-height:12px;color:#555555;transform:scaleX(0.8836);">2022-11-09</span>
<div class="r" style="left:502px;top:181px;width:2px;height:2px;background:#222;"></div>
<div class="r" style="left:590px;top:175px;width:57px;height:25px;background:#ececec;border:1px solid #cdcdcd;box-shadow:inset 1px 1px 0 #f8f8f8;"></div>
<span class="t" style="left:610.40px;top:181.34px;font-size:12px;line-height:12px;color:#111;transform:scaleX(0.7800);"><u>F</u>iltr</span>
<div class="r" style="left:650px;top:175px;width:2px;height:24px;background:#1a1a1a;border-right:1px solid #fff;"></div>
<div class="r" style="left:898px;top:175px;width:2px;height:24px;background:#1a1a1a;border-right:1px solid #fff;"></div>
<div class="r" style="left:1074px;top:175px;width:2px;height:24px;background:#1a1a1a;border-right:1px solid #fff;"></div>
<span class="t" style="left:658.30px;top:179.94px;font-size:12px;line-height:12px;color:#111;transform:scaleX(0.9425);">Wpłaty:</span>
<span class="t" style="left:738.60px;top:179.94px;font-size:12px;line-height:12px;color:#111;transform:scaleX(0.8639);">0,00 zł</span>
<span class="t" style="left:776.30px;top:179.94px;font-size:12px;line-height:12px;color:#111;transform:scaleX(0.9196);">Wypłaty:</span>
<span class="t" style="left:858.60px;top:179.94px;font-size:12px;line-height:12px;color:#111;transform:scaleX(0.9139);">0,00 zł</span>
<span class="t" style="left:906.00px;top:179.84px;font-size:12px;line-height:12px;color:#111;transform:scaleX(0.8890);">Aktualne saldo:</span>
<div class="r" style="left:986px;top:175px;width:81px;height:17px;background:#fff;border:1px solid #555;overflow:hidden;">
<span class="t" style="left:46.80px;top:0.54px;font-size:12px;line-height:12px;color:#111;transform:scaleX(0.9361);">0,00 zł</span>
</div>
<div class="r" style="left:1098px;top:174px;width:73px;height:26px;background:#ececec;border:1px solid #cdcdcd;box-shadow:inset 1px 1px 0 #f8f8f8;"></div>
<span class="t" style="left:1109.40px;top:182.04px;font-size:12px;line-height:12px;color:#111;transform:scaleX(0.8754);">Stan pocz.</span>
<div class="r" style="left:194px;top:221px;width:976px;height:313px;border:1px solid #a0a0a0;border-right-color:#e0e0e0;border-bottom-color:#a8a8a8;"></div>
<div class="r" style="left:202px;top:231px;width:97px;height:25px;background:#ececec;border:1px solid #cdcdcd;box-shadow:inset 1px 1px 0 #f8f8f8;"></div>
<div class="r" style="left:306px;top:231px;width:81px;height:25px;background:#ececec;border:1px solid #cdcdcd;box-shadow:inset 1px 1px 0 #f8f8f8;"></div>
<div class="r" style="left:394px;top:231px;width:81px;height:25px;background:#ececec;border:1px solid #cdcdcd;box-shadow:inset 1px 1px 0 #f8f8f8;"></div>
<svg class="r" style="left:213px;top:234px;" width="20" height="18" viewBox="0 0 20 18"><path d="M2.1 1.1 H9 L13.8 5.5 V16.5 H2.1z" fill="#fafcfc" stroke="#707070" stroke-width="0.9"/><path d="M9 1.1 L13.8 5.5 H9z" fill="#e4e4e4" stroke="#707070" stroke-width="0.9" stroke-linejoin="round"/><circle cx="4.5" cy="4.5" r="0.7" fill="#333"/><circle cx="4.5" cy="7.5" r="0.7" fill="#333"/><circle cx="4.5" cy="10.5" r="0.7" fill="#333"/><circle cx="4.5" cy="13.5" r="0.7" fill="#333"/><path d="M6.3 4.5 H9.5 M6.3 7.5 H10" stroke="#888" stroke-width="0.8"/><path d="M11.5 7.6 H14.9 V10.5 H17.9 V13.9 H14.9 V16.8 H11.5 V13.9 H8.5 V10.5 H11.5z" fill="#5cc050" stroke="#1e7a18" stroke-width="1"/></svg>
<span class="t" style="left:234.30px;top:237.64px;font-size:12px;line-height:12px;color:#111;transform:scaleX(0.8789);">N<u>o</u>wa poz.</span>
<svg class="r" style="left:320px;top:234px;" width="19" height="18" viewBox="0 0 19 18"><path d="M1 1.5 H9.5 L13 5 V16.8 H1z" fill="#a2a2a2"/><path d="M1.6 2 H7.5 L1.6 8.5z" fill="#f4f4f4"/><path d="M7.5 16.8 L15.5 3 Q16.8 1.2 18.2 2.6 L10.8 16.8z" fill="#a2a2a2" stroke="#eeeeee" stroke-width="0.9"/></svg>
<span class="t" style="left:340.40px;top:237.64px;font-size:12px;line-height:12px;color:#a0a0a0;transform:scaleX(0.8833);"><u>E</u>dycja</span>
<svg class="r" style="left:411px;top:234px;" width="18" height="18" viewBox="0 0 18 18"><path d="M1 1.5 H8 L11.8 5.2 V10 H16.8 V14 H11.8 V16.8 H1z" fill="#a2a2a2"/><path d="M2.5 3h1M4.5 3h1M6.5 3h1M2.5 5h1M4.5 5h1M2.5 7h1" stroke="#f4f4f4" stroke-width="0.9"/></svg>
<span class="t" style="left:431.30px;top:237.64px;font-size:12px;line-height:12px;color:#a0a0a0;transform:scaleX(0.8893);"><u>U</u>suń</span>
<div class="r" style="left:202px;top:263px;width:870px;height:22px;background:linear-gradient(#dcdcdc,#c6c6c6 60%,#bcbcbc);"></div>
<div class="r" style="left:263px;top:263px;width:95px;height:22px;background:linear-gradient(#bccbde,#a2b4ca 55%,#7f97ae);"></div>
<div class="r" style="left:202px;top:285px;width:962px;height:234px;background:#fff;"></div>
<div class="r" style="left:262px;top:263px;width:1px;height:22px;background:#9a9a9a;"></div>
<div class="r" style="left:263px;top:263px;width:1px;height:22px;background:#f6f6f6;"></div>
<div class="r" style="left:262px;top:285px;width:1px;height:234px;background:#ececec;"></div>
<div class="r" style="left:358px;top:263px;width:1px;height:22px;background:#9a9a9a;"></div>
<div class="r" style="left:359px;top:263px;width:1px;height:22px;background:#f6f6f6;"></div>
<div class="r" style="left:358px;top:285px;width:1px;height:234px;background:#ececec;"></div>
<div class="r" style="left:401px;top:263px;width:1px;height:22px;background:#9a9a9a;"></div>
<div class="r" style="left:402px;top:263px;width:1px;height:22px;background:#f6f6f6;"></div>
<div class="r" style="left:401px;top:285px;width:1px;height:234px;background:#ececec;"></div>
<div class="r" style="left:497px;top:263px;width:1px;height:22px;background:#9a9a9a;"></div>
<div class="r" style="left:498px;top:263px;width:1px;height:22px;background:#f6f6f6;"></div>
<div class="r" style="left:497px;top:285px;width:1px;height:234px;background:#ececec;"></div>
<div class="r" style="left:706px;top:263px;width:1px;height:22px;background:#9a9a9a;"></div>
<div class="r" style="left:707px;top:263px;width:1px;height:22px;background:#f6f6f6;"></div>
<div class="r" style="left:706px;top:285px;width:1px;height:234px;background:#ececec;"></div>
<div class="r" style="left:908px;top:263px;width:1px;height:22px;background:#9a9a9a;"></div>
<div class="r" style="left:909px;top:263px;width:1px;height:22px;background:#f6f6f6;"></div>
<div class="r" style="left:908px;top:285px;width:1px;height:234px;background:#ececec;"></div>
<div class="r" style="left:1068px;top:263px;width:1px;height:22px;background:#9a9a9a;"></div>
<div class="r" style="left:1069px;top:263px;width:1px;height:22px;background:#f6f6f6;"></div>
<div class="r" style="left:1068px;top:285px;width:1px;height:234px;background:#ececec;"></div>
<div class="r" style="left:202px;top:285px;width:870px;height:1px;background:#f4f4f4;"></div>
<span class="t" style="left:206.20px;top:268.54px;font-size:12px;line-height:12px;color:#111;transform:scaleX(0.8885);">Data</span>
<span class="t" style="left:267.30px;top:268.54px;font-size:12px;line-height:12px;color:#111;transform:scaleX(0.8661);">Numer dok.</span>
<span class="t" style="left:364.00px;top:268.54px;font-size:12px;line-height:12px;color:#111;transform:scaleX(0.9069);">Typ d</span>
<span class="t" style="left:406.30px;top:268.54px;font-size:12px;line-height:12px;color:#111;transform:scaleX(0.8853);">Kwota</span>
<span class="t" style="left:502.90px;top:268.54px;font-size:12px;line-height:12px;color:#111;transform:scaleX(0.8700);">Treść</span>
<span class="t" style="left:711.70px;top:268.54px;font-size:12px;line-height:12px;color:#111;transform:scaleX(0.8812);">Dla kogo</span>
<span class="t" style="left:913.00px;top:268.54px;font-size:12px;line-height:12px;color:#111;transform:scaleX(0.8917);">Wystawił</span>
<svg class="r" style="left:345px;top:272px;" width="11" height="6" viewBox="0 0 11 6"><path d="M0 0h10l-5 5.5z" fill="#0e0ea8"/></svg>
<div class="r" style="left:194px;top:551px;width:137px;height:25px;background:#ececec;border:1px solid #cdcdcd;box-shadow:inset 1px 1px 0 #f8f8f8;"></div>
<svg class="r" style="left:227px;top:554px;" width="17" height="18" viewBox="0 0 17 18"><path d="M12.88 6.00 L12.74 6.79 L11.38 7.04 L11.09 7.55 L11.55 8.85 L10.94 9.37 L9.74 8.68 L9.18 8.88 L8.70 10.18 L7.90 10.18 L7.42 8.88 L6.86 8.68 L5.66 9.37 L5.05 8.85 L5.51 7.55 L5.22 7.04 L3.86 6.79 L3.72 6.00 L4.91 5.30 L5.02 4.72 L4.13 3.66 L4.53 2.96 L5.90 3.20 L6.35 2.81 L6.36 1.43 L7.11 1.16 L8.00 2.21 L8.60 2.21 L9.49 1.16 L10.24 1.43 L10.25 2.81 L10.70 3.20 L12.07 2.96 L12.47 3.66 L11.58 4.72 L11.69 5.30z" fill="#9ab8e8"/><circle cx="8.3" cy="5.6" r="1.5" fill="#f0f4fa"/><path d="M1 8.5 L3.5 6.8 H5.2 V16.8 H1.5 V10.5 L1 10.8z" fill="#000"/><rect x="5" y="8.6" width="11" height="8.2" fill="#000"/><path d="M6.5 11 q1.5 -1.5 3 0 l-2.5 3 h2.8" fill="none" stroke="#fff" stroke-width="1"/><path d="M11 10.5 h3 l-1.6 2 q2 0.5 0.2 2.5 h-1.6" fill="none" stroke="#fff" stroke-width="1"/></svg>
<span class="t" style="left:246.20px;top:558.74px;font-size:12px;line-height:12px;color:#111;transform:scaleX(0.8845);"><u>N</u>umeracja</span>
<div class="r" style="left:354px;top:561px;width:13px;height:13px;background:#fff;border:1px solid #333;"></div>
<svg class="r" style="left:355px;top:562px;" width="11" height="11" viewBox="0 0 11 11"><path d="M2 5.5 L4.5 8.5 L9.5 2" fill="none" stroke="#111" stroke-width="1.3"/></svg>
<span class="t" style="left:370.60px;top:561.84px;font-size:12px;line-height:12px;color:#111;transform:scaleX(0.8779);">Dodawaj rozliczone</span>
<div class="r" style="left:1002px;top:551px;width:73px;height:25px;background:#ececec;border:1px solid #cdcdcd;box-shadow:inset 1px 1px 0 #f8f8f8;"></div>
<svg class="r" style="left:1005px;top:554px;" width="18" height="16" viewBox="0 0 18 16"><rect x="4.5" y="0.5" width="8" height="6" fill="#fff" stroke="#a0a0a0"/><rect x="0.5" y="6" width="16" height="6.5" fill="#a8a8a8" stroke="#808080"/><path d="M2 8.5h13M2 10.5h13" stroke="#d0d0d0"/><rect x="4.5" y="11.5" width="8" height="3.5" fill="#fff" stroke="#a0a0a0"/></svg>
<span class="t" style="left:1040.50px;top:557.64px;font-size:12px;line-height:12px;color:#111;transform:scaleX(0.8800);">Drukuj</span>
<div class="r" style="left:1082px;top:551px;width:81px;height:25px;background:#ececec;border:1px solid #cdcdcd;box-shadow:inset 1px 1px 0 #f8f8f8;"></div>
<span class="t" style="left:1103.90px;top:557.64px;font-size:12px;line-height:12px;color:#111;transform:scaleX(0.8952);"><u>Z</u>amknij</span>
</body></html>
